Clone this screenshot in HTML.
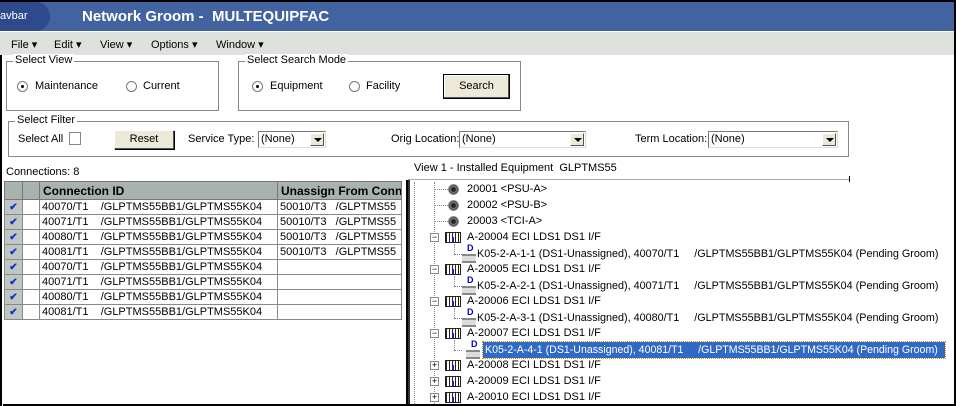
<!DOCTYPE html><html><head><style>
*{margin:0;padding:0;box-sizing:border-box}
body{width:956px;height:406px;overflow:hidden;background:#fff;font-family:"Liberation Sans",sans-serif;font-size:11px;color:#000;position:relative}
.a{position:absolute;white-space:nowrap}
.gb{position:absolute;border:1px solid #888}
.gb>span{position:absolute;top:-8px;left:6px;background:#fff;padding:0 2px;font-size:11px}
.rad{position:absolute;width:11px;height:11px;border-radius:50%;border:1px solid #777;background:#fff}
.rad.on::after{content:"";position:absolute;left:3px;top:3px;width:3px;height:3px;background:#000;border-radius:50%}
.btn{position:absolute;background:#ece9d8;border:1px solid #fff;border-right-color:#555;border-bottom-color:#555;box-shadow:1px 1px 0 #000;text-align:center;font-size:11px}
.sel{position:absolute;height:17px;border:1px solid #777;border-right-color:#ddd;border-bottom-color:#ddd;background:#fff;font-size:11px;padding-left:2px;line-height:15px}
.sel b{position:absolute;right:1px;top:1px;width:14px;height:13px;background:#ece9d8;border:1px solid #fff;border-right-color:#555;border-bottom-color:#555}
.sel b::after{content:"";position:absolute;left:3px;top:4px;border:4px solid transparent;border-top:4px solid #000;border-bottom:0}
table{border-collapse:collapse;position:absolute;left:4px;top:181px;table-layout:fixed;width:397px}
td{border:1px solid #888;height:15px;padding:0 2px;font-size:11px;white-space:nowrap;overflow:hidden;line-height:13px}
th{background:#a8b3ad;border:1px solid #777;height:18px;text-align:left;padding:0 3px;font-size:12px;white-space:nowrap;overflow:hidden}
td.ck{background:#c0c7c2;color:#1030d0;font-weight:bold;text-align:center;font-size:10px}
.t{position:absolute;white-space:nowrap;font-size:11px}
.exp{position:absolute;width:9px;height:9px;border:1px solid #888;background:#fff;font-size:9px;line-height:7px;text-align:center}
.card{position:absolute;width:16px;height:11px;border:1px solid #222;background:repeating-linear-gradient(90deg,#222 0 1px,#fff 1px 3px)}
.card::after{content:"";position:absolute;left:6px;top:4px;width:2px;height:5px;background:#22c}
.port{position:absolute;width:14px;height:14px}
.port::before{content:"D";position:absolute;left:5px;top:-3px;color:#00c;font-weight:bold;font-size:9px}
.port::after{content:"";position:absolute;left:0;top:8px;width:14px;height:5px;border-top:2px solid #888;border-bottom:2px solid #888;background:#ddd}
.rb{position:absolute;width:11px;height:11px;border-radius:50%;background:radial-gradient(circle,#222 0 2px,#888 3px,#444 4px,#999 5px)}
.dl{position:absolute;border-left:1px dotted #888}
.dh{position:absolute;border-top:1px dotted #888}
</style></head><body>
<div class="a" style="left:0;top:0;width:956px;height:2px;background:#000"></div>
<div class="a" style="left:0;top:2px;width:954px;height:29px;background:#4263a0"></div>
<div class="a" style="left:0;top:2px;width:50px;height:29px;background:#2c4a8c;border-radius:0 16px 16px 0;color:#fff;font-size:11px;line-height:29px">avbar</div>
<div class="a" style="left:82px;top:8px;color:#fff;font-size:15px;font-weight:bold">Network Groom -&nbsp; MULTEQUIPFAC</div>
<div class="a" style="left:0;top:31px;width:954px;height:24px;background:#dde3dc;border-top:1px solid #fff"></div>
<div class="a" style="left:11px;top:38px">File ▾</div>
<div class="a" style="left:54px;top:38px">Edit ▾</div>
<div class="a" style="left:100px;top:38px">View ▾</div>
<div class="a" style="left:151px;top:38px">Options ▾</div>
<div class="a" style="left:216px;top:38px">Window ▾</div>
<div class="a" style="left:954px;top:0;width:2px;height:406px;background:#000"></div>
<div class="a" style="left:0;top:55px;width:2px;height:351px;background:#000"></div>

<div class="gb" style="left:6px;top:61px;width:213px;height:50px"><span>Select View</span></div>
<div class="rad on" style="left:17px;top:81px"></div><div class="a" style="left:35px;top:80px">Maintenance</div>
<div class="rad" style="left:126px;top:81px"></div><div class="a" style="left:143px;top:80px">Current</div>
<div class="gb" style="left:238px;top:61px;width:283px;height:50px"><span>Select Search Mode</span></div>
<div class="rad on" style="left:252px;top:81px"></div><div class="a" style="left:270px;top:80px">Equipment</div>
<div class="rad" style="left:349px;top:81px"></div><div class="a" style="left:366px;top:80px">Facility</div>
<div class="btn" style="left:443px;top:74px;width:67px;height:25px;line-height:23px;border:1px solid #000;box-shadow:inset -1px -1px 0 #555,inset 1px 1px 0 #fff">Search</div>

<div class="gb" style="left:8px;top:121px;width:841px;height:36px"><span>Select Filter</span></div>
<div class="a" style="left:18px;top:133px">Select All</div>
<div class="a" style="left:69px;top:132px;width:12px;height:13px;border:1px solid #888"></div>
<div class="btn" style="left:114px;top:130px;width:60px;height:19px;line-height:17px">Reset</div>
<div class="a" style="left:188px;top:133px">Service Type:</div>
<div class="sel" style="left:258px;top:131px;width:68px">(None)<b></b></div>
<div class="a" style="left:391px;top:133px">Orig Location:</div>
<div class="sel" style="left:459px;top:131px;width:127px">(None)<b></b></div>
<div class="a" style="left:635px;top:133px">Term Location:</div>
<div class="sel" style="left:708px;top:131px;width:130px">(None)<b></b></div>

<div class="a" style="left:6px;top:166px">Connections: 8</div>
<div class="a" style="left:3px;top:180px;width:405px;height:226px;border-right:2px solid #000;border-bottom:2px solid #000"></div>
<table>
<colgroup><col style="width:18px"><col style="width:17px"><col style="width:238px"><col style="width:124px"></colgroup>
<tr><th></th><th></th><th>Connection ID</th><th>Unassign From Conne</th></tr>
<tr><td class="ck">✔</td><td></td><td>40070/T1&nbsp;&nbsp;&nbsp;&nbsp;/GLPTMS55BB1/GLPTMS55K04</td><td>50010/T3&nbsp;&nbsp;&nbsp;/GLPTMS55</td></tr>
<tr><td class="ck">✔</td><td></td><td>40071/T1&nbsp;&nbsp;&nbsp;&nbsp;/GLPTMS55BB1/GLPTMS55K04</td><td>50010/T3&nbsp;&nbsp;&nbsp;/GLPTMS55</td></tr>
<tr><td class="ck">✔</td><td></td><td>40080/T1&nbsp;&nbsp;&nbsp;&nbsp;/GLPTMS55BB1/GLPTMS55K04</td><td>50010/T3&nbsp;&nbsp;&nbsp;/GLPTMS55</td></tr>
<tr><td class="ck">✔</td><td></td><td>40081/T1&nbsp;&nbsp;&nbsp;&nbsp;/GLPTMS55BB1/GLPTMS55K04</td><td>50010/T3&nbsp;&nbsp;&nbsp;/GLPTMS55</td></tr>
<tr><td class="ck">✔</td><td></td><td>40070/T1&nbsp;&nbsp;&nbsp;&nbsp;/GLPTMS55BB1/GLPTMS55K04</td><td></td></tr>
<tr><td class="ck">✔</td><td></td><td>40071/T1&nbsp;&nbsp;&nbsp;&nbsp;/GLPTMS55BB1/GLPTMS55K04</td><td></td></tr>
<tr><td class="ck">✔</td><td></td><td>40080/T1&nbsp;&nbsp;&nbsp;&nbsp;/GLPTMS55BB1/GLPTMS55K04</td><td></td></tr>
<tr><td class="ck">✔</td><td></td><td>40081/T1&nbsp;&nbsp;&nbsp;&nbsp;/GLPTMS55BB1/GLPTMS55K04</td><td></td></tr>
</table>

<div class="a" style="left:414px;top:162px">View 1 - Installed Equipment&nbsp; GLPTMS55</div>
<div class="a" style="left:408px;top:179px;width:442px;height:1px;background:#aaa"></div>
<div class="a" style="left:849px;top:176px;width:1px;height:6px;background:#000"></div>
<div class="a" style="left:408px;top:180px;width:2px;height:226px;background:#333"></div>
<div class="a" style="left:408px;top:404px;width:546px;height:2px;background:#000"></div>
<div class="dl" style="left:414px;top:182px;height:222px"></div>
<div class="dl" style="left:434px;top:182px;height:222px"></div>

<div class="dh" style="left:434px;top:189px;width:14px"></div><div class="rb" style="left:448px;top:184px"></div><div class="t" style="left:467px;top:183px">20001 &lt;PSU-A&gt;</div>
<div class="dh" style="left:434px;top:205px;width:14px"></div><div class="rb" style="left:448px;top:200px"></div><div class="t" style="left:467px;top:199px">20002 &lt;PSU-B&gt;</div>
<div class="dh" style="left:434px;top:221px;width:14px"></div><div class="rb" style="left:448px;top:216px"></div><div class="t" style="left:467px;top:215px">20003 &lt;TCI-A&gt;</div>

<div class="exp" style="left:430px;top:233px">−</div><div class="card" style="left:445px;top:232px"></div><div class="t" style="left:467px;top:231px">A-20004 ECI LDS1 DS1 I/F</div>
<div class="dl" style="left:454px;top:244px;height:10px"></div><div class="dh" style="left:454px;top:254px;width:8px"></div><div class="port" style="left:462px;top:246px"></div><div class="t" style="left:477px;top:248px;font-size:10.8px">K05-2-A-1-1 (DS1-Unassigned), 40070/T1&nbsp;&nbsp;&nbsp;&nbsp;&nbsp;/GLPTMS55BB1/GLPTMS55K04 (Pending Groom)</div>
<div class="exp" style="left:430px;top:265px">−</div><div class="card" style="left:445px;top:264px"></div><div class="t" style="left:467px;top:263px">A-20005 ECI LDS1 DS1 I/F</div>
<div class="dl" style="left:454px;top:276px;height:10px"></div><div class="dh" style="left:454px;top:286px;width:8px"></div><div class="port" style="left:462px;top:278px"></div><div class="t" style="left:477px;top:280px;font-size:10.8px">K05-2-A-2-1 (DS1-Unassigned), 40071/T1&nbsp;&nbsp;&nbsp;&nbsp;&nbsp;/GLPTMS55BB1/GLPTMS55K04 (Pending Groom)</div>
<div class="exp" style="left:430px;top:297px">−</div><div class="card" style="left:445px;top:296px"></div><div class="t" style="left:467px;top:295px">A-20006 ECI LDS1 DS1 I/F</div>
<div class="dl" style="left:454px;top:308px;height:10px"></div><div class="dh" style="left:454px;top:318px;width:8px"></div><div class="port" style="left:462px;top:310px"></div><div class="t" style="left:477px;top:312px;font-size:10.8px">K05-2-A-3-1 (DS1-Unassigned), 40080/T1&nbsp;&nbsp;&nbsp;&nbsp;&nbsp;/GLPTMS55BB1/GLPTMS55K04 (Pending Groom)</div>
<div class="exp" style="left:430px;top:329px">−</div><div class="card" style="left:445px;top:328px"></div><div class="t" style="left:467px;top:327px">A-20007 ECI LDS1 DS1 I/F</div>
<div class="dl" style="left:454px;top:340px;height:10px"></div><div class="dh" style="left:454px;top:350px;width:8px"></div><div class="port" style="left:466px;top:342px"></div>
<div class="t" style="left:483px;top:342px;width:462px;height:16px;background:#316ac5;color:#fff;outline:1px dotted #c8a000;padding-left:2px;line-height:16px;font-size:10.6px;overflow:hidden">K05-2-A-4-1 (DS1-Unassigned), 40081/T1&nbsp;&nbsp;&nbsp;&nbsp;&nbsp;/GLPTMS55BB1/GLPTMS55K04 (Pending Groom)</div>
<div class="exp" style="left:430px;top:361px">+</div><div class="card" style="left:445px;top:360px"></div><div class="t" style="left:467px;top:359px">A-20008 ECI LDS1 DS1 I/F</div>
<div class="exp" style="left:430px;top:377px">+</div><div class="card" style="left:445px;top:376px"></div><div class="t" style="left:467px;top:375px">A-20009 ECI LDS1 DS1 I/F</div>
<div class="exp" style="left:430px;top:393px">+</div><div class="card" style="left:445px;top:392px"></div><div class="t" style="left:467px;top:391px">A-20010 ECI LDS1 DS1 I/F</div>
</body></html>
